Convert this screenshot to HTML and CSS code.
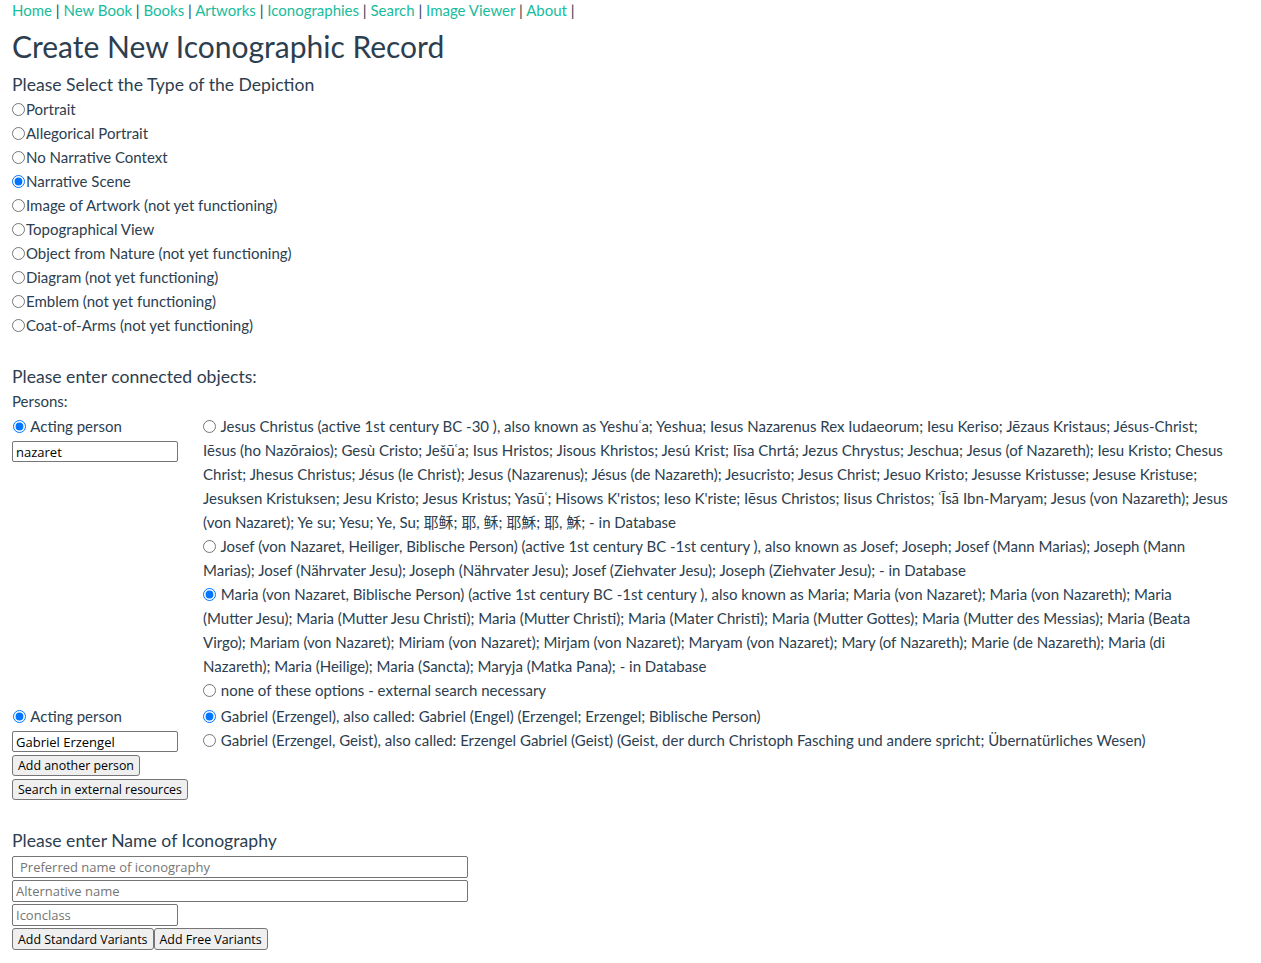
FILE: index.html
```html
<!DOCTYPE html>
<html lang="en">
<head>
<meta charset="utf-8">
<title>Create New Iconographic Record</title>
<link rel="stylesheet" href="styles.css">
</head>
<body>
<div class="page">
  <nav class="nav">
    <a href="#">Home</a> | <a href="#">New Book</a> | <a href="#">Books</a> | <a href="#">Artworks</a> | <a href="#">Iconographies</a> | <a href="#">Search</a> | <a href="#">Image Viewer</a> | <a href="#">About</a> |
  </nav>
  <h1 class="title">Create New Iconographic Record</h1>

  <h4 class="section">Please Select the Type of the Depiction</h4>
  <div class="types">
    <label class="type"><input type="radio" name="type">Portrait</label>
    <label class="type"><input type="radio" name="type">Allegorical Portrait</label>
    <label class="type"><input type="radio" name="type">No Narrative Context</label>
    <label class="type"><input type="radio" name="type" checked>Narrative Scene</label>
    <label class="type"><input type="radio" name="type">Image of Artwork (not yet functioning)</label>
    <label class="type"><input type="radio" name="type">Topographical View</label>
    <label class="type"><input type="radio" name="type">Object from Nature (not yet functioning)</label>
    <label class="type"><input type="radio" name="type">Diagram (not yet functioning)</label>
    <label class="type"><input type="radio" name="type">Emblem (not yet functioning)</label>
    <label class="type"><input type="radio" name="type">Coat-of-Arms (not yet functioning)</label>
  </div>

  <h4 class="section connected">Please enter connected objects:</h4>
  <div class="sub">Persons:</div>

  <div class="person first-person">
    <div class="person-left">
      <label class="role"><input type="radio" name="role1" checked> Acting person</label>
      <input class="field small" type="text" value="nazaret">
    </div>
    <div class="person-right">
      <label class="opt"><input type="radio" name="p1"> Jesus Christus (active 1st century BC -30 ), also known as Yeshuʿa; Yeshua; Iesus Nazarenus Rex Iudaeorum; Iesu Keriso; Jēzaus Kristaus; Jésus-Christ;<br>Iēsus (ho Nazōraios); Gesù Cristo; Ješūʿa; Isus Hristos; Jisous Khristos; Jesú Krist; Iīsa Chrtá; Jezus Chrystus; Jeschua; Jesus (of Nazareth); Iesu Kristo; Chesus<br>Christ; Jhesus Christus; Jésus (le Christ); Jesus (Nazarenus); Jésus (de Nazareth); Jesucristo; Jesus Christ; Jesuo Kristo; Jesusse Kristusse; Jesuse Kristuse;<br>Jesuksen Kristuksen; Jesu Kristo; Jesus Kristus; Yasūʿ; Hisows K'ristos; Ieso K'riste; Iēsus Christos; Iisus Christos; ʿĪsā Ibn-Maryam; Jesus (von Nazareth); Jesus<br>(von Nazaret); Ye su; Yesu; Ye, Su; 耶稣; 耶, 稣; 耶穌; 耶, 穌; - in Database</label>
      <label class="opt"><input type="radio" name="p1"> Josef (von Nazaret, Heiliger, Biblische Person) (active 1st century BC -1st century ), also known as Josef; Joseph; Josef (Mann Marias); Joseph (Mann<br>Marias); Josef (Nährvater Jesu); Joseph (Nährvater Jesu); Josef (Ziehvater Jesu); Joseph (Ziehvater Jesu); - in Database</label>
      <label class="opt"><input type="radio" name="p1" checked> Maria (von Nazaret, Biblische Person) (active 1st century BC -1st century ), also known as Maria; Maria (von Nazaret); Maria (von Nazareth); Maria<br>(Mutter Jesu); Maria (Mutter Jesu Christi); Maria (Mutter Christi); Maria (Mater Christi); Maria (Mutter Gottes); Maria (Mutter des Messias); Maria (Beata<br>Virgo); Mariam (von Nazaret); Miriam (von Nazaret); Mirjam (von Nazaret); Maryam (von Nazaret); Mary (of Nazareth); Marie (de Nazareth); Maria (di<br>Nazareth); Maria (Heilige); Maria (Sancta); Maryja (Matka Pana); - in Database</label>
      <label class="opt"><input type="radio" name="p1"> none of these options - external search necessary</label>
    </div>
  </div>

  <div class="person second">
    <div class="person-left">
      <label class="role"><input type="radio" name="role2" checked> Acting person</label>
      <input class="field small" type="text" value="Gabriel Erzengel">
      <button class="btn" type="button">Add another person</button>
      <button class="btn" type="button">Search in external resources</button>
    </div>
    <div class="person-right">
      <label class="opt"><input type="radio" name="p2" checked> Gabriel (Erzengel), also called: Gabriel (Engel) (Erzengel; Erzengel; Biblische Person)</label>
      <label class="opt"><input type="radio" name="p2"> Gabriel (Erzengel, Geist), also called: Erzengel Gabriel (Geist) (Geist, der durch Christoph Fasching und andere spricht; Übernatürliches Wesen)</label>
    </div>
  </div>

  <h4 class="section naming">Please enter Name of Iconography</h4>
  <div class="names">
    <input class="field wide pref" type="text" placeholder="Preferred name of iconography">
    <input class="field wide" type="text" placeholder="Alternative name">
    <input class="field small tall" type="text" placeholder="Iconclass">
    <div class="btn-row">
      <button class="btn" type="button">Add Standard Variants</button><button class="btn" type="button">Add Free Variants</button>
    </div>
  </div>
</div>
</body>
</html>
```
FILE: styles.css
```css
html, body {
  margin: 0;
  padding: 0;
  background: #ffffff;
}
body {
  font-family: Lato, "Open Sans", "Noto Sans CJK SC", sans-serif;
  font-size: 15px;
  color: #2c3e50;
}
.page {
  padding: 0 12px;
}
.nav {
  font-size: 15px;
  line-height: 20px;
}
.nav a {
  color: #18bc9c;
  text-decoration: none;
}
.title {
  font-size: 30px;
  font-weight: 400;
  line-height: 36px;
  margin: 8px 0 0 0;
}
.section {
  font-size: 17.6px;
  font-weight: 400;
  line-height: 24px;
  margin: 9px 0 0 0;
}
.types {
  display: flex;
  flex-direction: column;
  margin-top: 0;
}
.type {
  line-height: 24px;
  display: flex;
  align-items: center;
}
.type input {
  margin: 0 1px 0 0;
  width: 13px;
  height: 13px;
}
.connected {
  margin-top: 28px;
}
.sub {
  line-height: 24px;
  margin-top: 0;
}
.person {
  display: flex;
  align-items: flex-start;
}
.person.first-person {
  margin-top: 1px;
}
.person.second {
  margin-top: 2px;
}
.person-left {
  width: 191px;
  flex: none;
  display: flex;
  flex-direction: column;
  align-items: flex-start;
  gap: 3px;
}
.role {
  line-height: 24px;
}
.role input, .opt input {
  margin: 0 1px 0 1px;
  width: 13px;
  height: 13px;
  vertical-align: -1px;
}
.opt input {
  margin-left: 0;
}
.person-right {
  flex: 1;
  display: flex;
  flex-direction: column;
  white-space: nowrap;
}
.opt {
  display: block;
  line-height: 24px;
}
.field {
  font-family: "Open Sans", Lato, sans-serif;
  font-size: 13px;
  color: #000;
  border: 1px solid #767676;
  border-radius: 2px;
  height: 21px;
  box-sizing: border-box;
  padding: 1px 3px;
  margin: 0;
}
.field::placeholder {
  color: #757575;
}
.small {
  width: 166px;
}
.wide {
  width: 456px;
  height: 22px;
}
.tall {
  height: 22px;
}
.pref {
  padding-left: 7px;
}
.btn {
  font-family: "Open Sans", Lato, sans-serif;
  font-size: 12.4px;
  color: #000;
  background: #efefef;
  border: 1px solid #767676;
  border-radius: 3px;
  height: 21px;
  padding: 0 5px;
  margin: 0;
  line-height: 17px;
}
.naming {
  margin-top: 29px;
}
.names {
  display: flex;
  flex-direction: column;
  align-items: flex-start;
  gap: 2px;
  margin-top: 3px;
}
.btn-row {
  display: flex;
}
.btn-row .btn {
  height: 22px;
}
```
